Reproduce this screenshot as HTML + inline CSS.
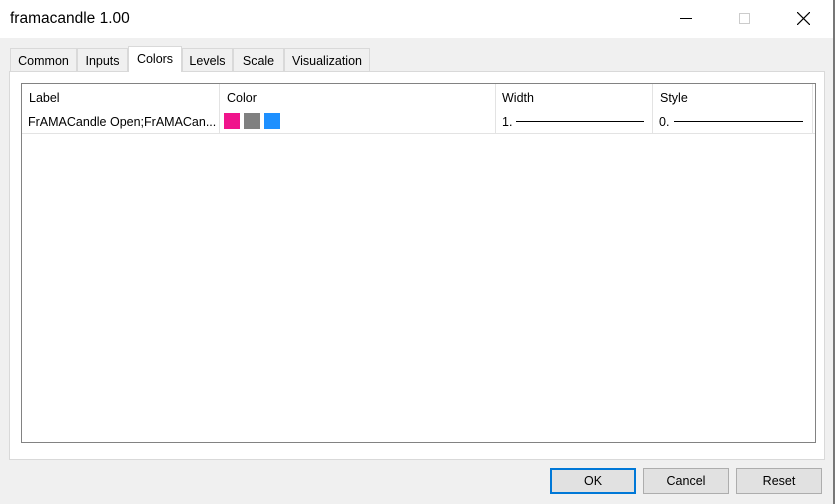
<!DOCTYPE html><html><head><style>
body{margin:0;width:835px;height:504px;overflow:hidden;background:#f0f0f0;font-family:"Segoe UI","Liberation Sans",sans-serif;font-size:12.5px;color:#000;position:relative}
div{position:absolute;box-sizing:border-box}
.t{border:1px solid #d9d9d9;border-bottom:none;background:#f0f0f0;top:48px;height:23px;text-align:center;line-height:24px;font-size:12.5px}
.b{top:468px;width:86px;height:26px;border:1px solid #adadad;background:#e1e1e1;text-align:center;line-height:25px}
.h{top:84px;height:26px;line-height:28px;padding-left:7px}
.r{top:110px;height:23px;line-height:24px;padding-left:6px}
.v{top:84px;height:49px;width:1px;background:#e3e3e3}
</style></head><body>
<div style="left:0;top:0;width:835px;height:38px;background:#fff"></div>
<div style="left:10px;top:10px;font-size:15.5px">framacandle 1.00</div>
<div style="left:680px;top:18px;width:12px;height:1px;background:#000"></div>
<div style="left:739px;top:13px;width:11px;height:11px;border:1px solid #ccc"></div>
<svg style="position:absolute;left:797px;top:12px" width="13" height="13"><path d="M0 0L13 13M13 0L0 13" stroke="#000" stroke-width="1.2"/></svg>
<div style="left:833px;top:0;width:2px;height:504px;background:#777"></div>
<div style="left:9px;top:71px;width:816px;height:389px;background:#fff;border:1px solid #d9d9d9"></div>
<div class="t" style="left:10px;width:67px">Common</div>
<div class="t" style="left:77px;width:51px">Inputs</div>
<div class="t" style="left:128px;width:54px;top:46px;height:26px;background:#fff;line-height:24px">Colors</div>
<div class="t" style="left:182px;width:51px">Levels</div>
<div class="t" style="left:233px;width:51px">Scale</div>
<div class="t" style="left:284px;width:86px">Visualization</div>
<div style="left:21px;top:83px;width:795px;height:360px;border:1px solid #828282;background:#fff"></div>
<div style="left:22px;top:133px;width:793px;height:1px;background:#e3e3e3"></div>
<div class="v" style="left:219px"></div><div class="v" style="left:495px"></div><div class="v" style="left:652px"></div><div class="v" style="left:812px"></div>
<div class="h" style="left:22px">Label</div>
<div class="h" style="left:220px">Color</div>
<div class="h" style="left:495px">Width</div>
<div class="h" style="left:653px">Style</div>
<div class="r" style="left:22px">FrAMACandle Open;FrAMACan...</div>
<div style="left:224px;top:113px;width:16px;height:16px;background:#f0148c"></div>
<div style="left:244px;top:113px;width:16px;height:16px;background:#808080"></div>
<div style="left:264px;top:113px;width:16px;height:16px;background:#1e90ff"></div>
<div class="r" style="left:496px">1.</div>
<div style="left:516px;top:121px;width:128px;height:1px;background:#000"></div>
<div class="r" style="left:653px">0.</div>
<div style="left:674px;top:121px;width:129px;height:1px;background:#000"></div>
<div class="b" style="left:550px;border:2px solid #0078d7;line-height:23px">OK</div>
<div class="b" style="left:643px">Cancel</div>
<div class="b" style="left:736px">Reset</div>
</body></html>
